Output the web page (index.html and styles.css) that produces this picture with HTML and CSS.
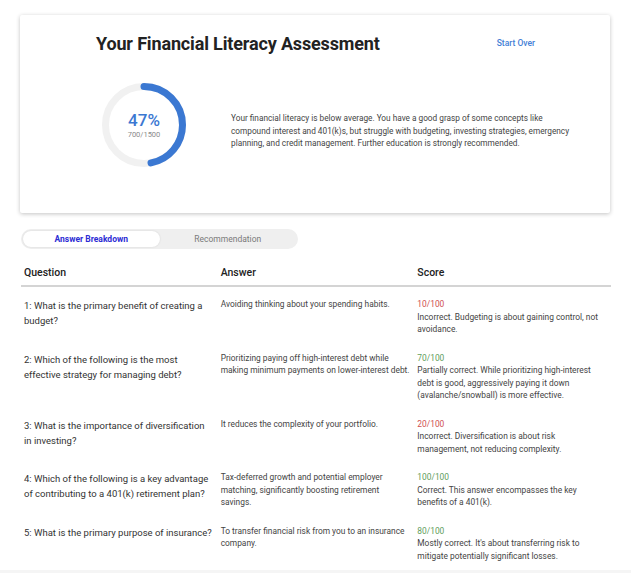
FILE: index.html
```html
<!DOCTYPE html>
<html lang="en">
<head>
<meta charset="utf-8">
<title>Your Financial Literacy Assessment</title>
<link rel="stylesheet" href="styles.css">
</head>
<body>
<div class="page">
  <section class="card">
    <div class="card-head">
      <h1 class="title">Your Financial Literacy Assessment</h1>
      <a class="start-over" href="#">Start Over</a>
    </div>
    <div class="card-body">
      <div class="gauge">
        <svg class="gauge-svg" width="86" height="86" viewBox="0 0 86 86">
          <circle cx="43" cy="43" r="38.5" fill="none" stroke="#f1f1f1" stroke-width="7"/>
          <circle cx="43" cy="43" r="38.5" fill="none" stroke="#3b78d2" stroke-width="7" stroke-linecap="round" stroke-dasharray="113.7 241.9" transform="rotate(-90 43 43)"/>
        </svg>
        <div class="gauge-label">
          <div class="pct">47%</div>
          <div class="pts">700/1500</div>
        </div>
      </div>
      <p class="summary">Your financial literacy is below average. You have a good grasp of some concepts like compound interest and 401(k)s, but struggle with budgeting, investing strategies, emergency planning, and credit management. Further education is strongly recommended.</p>
    </div>
  </section>

  <div class="tabs">
    <button class="tab active">Answer Breakdown</button>
    <button class="tab">Recommendation</button>
  </div>

  <table class="results">
    <thead>
      <tr><th>Question</th><th>Answer</th><th>Score</th></tr>
    </thead>
    <tbody>
      <tr>
        <td class="q">1: What is the primary benefit of creating a budget?</td>
        <td class="a">Avoiding thinking about your spending habits.</td>
        <td class="s"><div class="pts-val bad">10/100</div><div>Incorrect. Budgeting is about gaining control, not avoidance.</div></td>
      </tr>
      <tr>
        <td class="q">2: Which of the following is the most effective strategy for managing debt?</td>
        <td class="a">Prioritizing paying off high-interest debt while making minimum payments on lower-interest debt.</td>
        <td class="s"><div class="pts-val good">70/100</div><div>Partially correct. While prioritizing high-interest debt is good, aggressively paying it down (avalanche/snowball) is more effective.</div></td>
      </tr>
      <tr>
        <td class="q">3: What is the importance of diversification in investing?</td>
        <td class="a">It reduces the complexity of your portfolio.</td>
        <td class="s"><div class="pts-val bad">20/100</div><div>Incorrect. Diversification is about risk management, not reducing complexity.</div></td>
      </tr>
      <tr>
        <td class="q">4: Which of the following is a key advantage of contributing to a 401(k) retirement plan?</td>
        <td class="a">Tax-deferred growth and potential employer matching, significantly boosting retirement savings.</td>
        <td class="s"><div class="pts-val good">100/100</div><div>Correct. This answer encompasses the key benefits of a 401(k).</div></td>
      </tr>
      <tr>
        <td class="q">5: What is the primary purpose of insurance?</td>
        <td class="a">To transfer financial risk from you to an insurance company.</td>
        <td class="s"><div class="pts-val good">80/100</div><div>Mostly correct. It's about transferring risk to mitigate potentially significant losses.</div></td>
      </tr>
    </tbody>
  </table>
</div>
<div class="footer-band"></div>
</body>
</html>
```

FILE: styles.css
```css
* { box-sizing: border-box; }

body {
  margin: 0;
  background: #ffffff;
  font-family: Roboto, "Liberation Sans", sans-serif;
  color: #333;
}

.page {
  padding: 15px 21px 0 20px;
}

.card {
  height: 198px;
  background: #fff;
  border-radius: 2px;
  box-shadow: 0 1px 4px rgba(0, 0, 0, 0.24);
  padding: 18px 75px 0 76px;
}

.card-head {
  display: flex;
  align-items: center;
  justify-content: space-between;
  height: 20px;
}

.title {
  margin: 0;
  font-size: 18px;
  font-weight: 700;
  color: #222;
  letter-spacing: -0.15px;
}

.start-over {
  font-size: 8.5px;
  font-weight: 500;
  color: #4480d6;
  text-decoration: none;
}

.card-body {
  display: flex;
  align-items: center;
  margin-top: 29px;
  margin-left: 5px;
}

.gauge {
  position: relative;
  width: 86px;
  height: 86px;
  flex: none;
}

.gauge-svg { display: block; }

.gauge-label {
  position: absolute;
  inset: 0;
  display: flex;
  flex-direction: column;
  align-items: center;
  justify-content: center;
}

.pct {
  font-size: 17px;
  font-weight: 500;
  color: #3b78d2;
  line-height: 20px;
}

.pts {
  font-size: 7.5px;
  color: #8a8a8a;
  line-height: 10px;
}

.summary {
  flex: none;
  width: 350px;
  margin: 12px 0 0 44px;
  font-size: 8.25px;
  line-height: 12.5px;
  color: #444;
}

.tabs {
  display: flex;
  width: 277px;
  margin: 16px 0 0 1px;
  padding: 2px;
  background: #efefef;
  border-radius: 10px;
}

.tab {
  flex: 1;
  height: 16px;
  border: 0;
  border-radius: 8px;
  background: transparent;
  font-family: Roboto, "Liberation Sans", sans-serif;
  font-size: 8.5px;
  color: #7a7a7a;
  padding: 0;
}

.tab.active {
  background: #fff;
  color: #2c2cd4;
  font-weight: 700;
  box-shadow: 0 0 2px rgba(0, 0, 0, 0.12);
}

.results {
  width: 590px;
  margin: 17px 0 0 1px;
  border-collapse: collapse;
  table-layout: fixed;
}

.results th {
  text-align: left;
  font-size: 10.5px;
  font-weight: 500;
  color: #222;
  padding: 0 3px 5px;
  line-height: 14px;
  border-bottom: 2px solid #d4d4d4;
}

.results td {
  vertical-align: top;
  padding: 8px 4px 8px 3px;
}

.results tbody tr:first-child td { padding-top: 11px; }

.q {
  font-size: 9.5px;
  line-height: 15px;
  color: #333;
}

.results td.a {
  font-size: 8.4px;
  line-height: 12.5px;
  color: #444;
  padding-right: 3px;
}

.results td.s {
  font-size: 8.4px;
  line-height: 12.5px;
  color: #444;
  padding-right: 9px;
}

.pts-val.bad { color: #d0504f; }
.pts-val.good { color: #5f9e5c; }

.footer-band {
  height: 12px;
  background: #f5f5f5;
}
```
